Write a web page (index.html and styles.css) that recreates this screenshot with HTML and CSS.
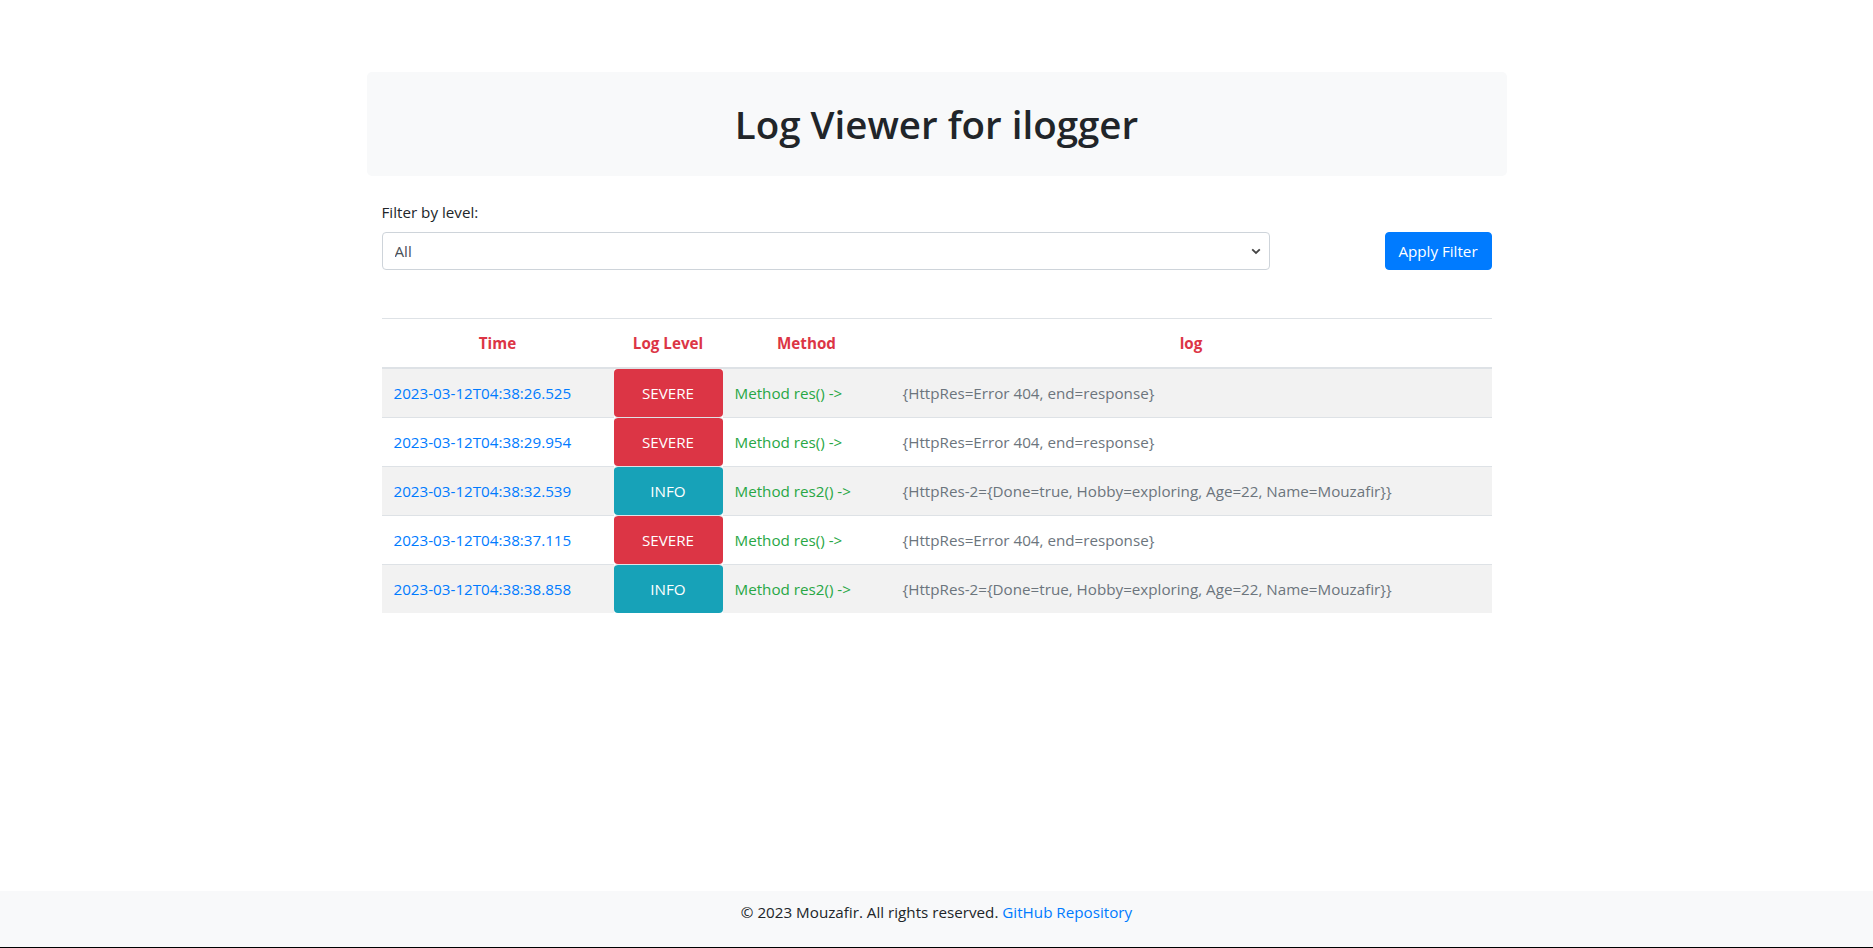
FILE: index.html
```html
<!DOCTYPE html>
<html lang="en">
<head>
<meta charset="utf-8">
<title>Log Viewer for ilogger</title>
<link rel="stylesheet" href="styles.css">
</head>
<body>
<main class="page">
  <div class="container">
    <div class="jumbotron">
      <h1 class="title">Log Viewer for ilogger</h1>
    </div>
    <form class="filter">
      <div class="filter-group">
        <label class="filter-label" for="level">Filter by level:</label>
        <div class="select-wrap">
          <select id="level" class="select">
            <option>All</option>
            <option>SEVERE</option>
            <option>INFO</option>
          </select>
          <svg class="select-arrow" width="10" height="7" viewBox="0 0 10 7"><path d="M1.2 1.3 L5 5 L8.8 1.3" fill="none" stroke="#444" stroke-width="1.8"/></svg>
        </div>
      </div>
      <button type="button" class="btn">Apply Filter</button>
    </form>
    <table class="logs">
      <thead>
        <tr>
          <th class="col-time">Time</th>
          <th class="col-level">Log Level</th>
          <th class="col-method">Method</th>
          <th class="col-log">log</th>
        </tr>
      </thead>
      <tbody>
        <tr class="odd">
          <td class="time">2023-03-12T04:38:26.525</td>
          <td class="level severe">SEVERE</td>
          <td class="method">Method res() -&gt;</td>
          <td class="log">{HttpRes=Error 404, end=response}</td>
        </tr>
        <tr>
          <td class="time">2023-03-12T04:38:29.954</td>
          <td class="level severe">SEVERE</td>
          <td class="method">Method res() -&gt;</td>
          <td class="log">{HttpRes=Error 404, end=response}</td>
        </tr>
        <tr class="odd">
          <td class="time">2023-03-12T04:38:32.539</td>
          <td class="level info">INFO</td>
          <td class="method">Method res2() -&gt;</td>
          <td class="log">{HttpRes-2={Done=true, Hobby=exploring, Age=22, Name=Mouzafir}}</td>
        </tr>
        <tr>
          <td class="time">2023-03-12T04:38:37.115</td>
          <td class="level severe">SEVERE</td>
          <td class="method">Method res() -&gt;</td>
          <td class="log">{HttpRes=Error 404, end=response}</td>
        </tr>
        <tr class="odd">
          <td class="time">2023-03-12T04:38:38.858</td>
          <td class="level info">INFO</td>
          <td class="method">Method res2() -&gt;</td>
          <td class="log">{HttpRes-2={Done=true, Hobby=exploring, Age=22, Name=Mouzafir}}</td>
        </tr>
      </tbody>
    </table>
  </div>
</main>
<footer class="footer">
  <span>© 2023 Mouzafir. All rights reserved. </span><a class="footer-link" href="#">GitHub Repository</a>
</footer>
</body>
</html>
```
FILE: styles.css
```css
* { box-sizing: border-box; }
html, body { height: 100%; }
body {
  margin: 0;
  font-family: "Open Sans", "Noto Sans", sans-serif;
  font-size: 15.2px;
  line-height: 24px;
  color: #212529;
  background: #fff;
  display: flex;
  flex-direction: column;
  min-height: 100vh;
}
.page { flex: 1; }
.container {
  width: 1140px;
  margin: 0 auto;
  padding: 72px 15px 0;
}
.jumbotron {
  margin: 0 -15px;
  height: 104px;
  background: #f8f9fa;
  border-radius: 5px;
  display: flex;
  align-items: center;
  justify-content: center;
}
.title {
  margin: 0;
  font-size: 38.5px;
  line-height: 48px;
  font-weight: 600;
  color: #212529;
}
.filter {
  margin-top: 24px;
  display: flex;
  align-items: flex-end;
  justify-content: space-between;
}
.filter-group { width: 888px; }
.filter-label {
  display: block;
  margin-bottom: 8px;
}
.select-wrap { position: relative; }
.select {
  display: block;
  width: 100%;
  height: 38px;
  padding: 6px 12px;
  font: inherit;
  color: #495057;
  background: #fff;
  border: 1px solid #ced4da;
  border-radius: 4px;
  appearance: none;
  -webkit-appearance: none;
}
.select-arrow {
  position: absolute;
  right: 9px;
  top: 16px;
}
.btn {
  height: 38px;
  width: 107px;
  padding: 6px 0;
  font: inherit;
  color: #fff;
  background: #007bff;
  border: 1px solid #007bff;
  border-radius: 4px;
}
.logs {
  margin-top: 48px;
  width: 1110px;
  table-layout: fixed;
  border-collapse: separate;
  border-spacing: 0;
}
.logs th {
  padding: 12px;
  color: #dc3545;
  font-weight: 700;
  text-align: center;
  border-top: 1px solid #dee2e6;
  border-bottom: 2px solid #dee2e6;
}
.col-time { width: 232px; }
.col-level { width: 109px; }
.col-method { width: 168px; }
.logs td {
  padding: 12px;
  border-top: 1px solid #dee2e6;
  white-space: nowrap;
}
.logs tbody tr:first-child td { border-top: 0; }
.logs tr.odd td { background-color: #f2f2f2; }
.time { color: #007bff; }
.logs tr td.level {
  text-align: center;
  color: #fff;
  border-radius: 4px;
  background-clip: padding-box;
}
.logs tr td.severe { background-color: #dc3545; }
.logs tr td.info { background-color: #17a2b8; }
.method { color: #28a745; }
.log { color: #6c757d; }
.footer {
  height: 57px;
  padding-top: 9px;
  text-align: center;
  background: #f8f9fa;
  border-bottom: 1px solid #000;
}
.footer-link {
  color: #007bff;
  text-decoration: none;
}
```
